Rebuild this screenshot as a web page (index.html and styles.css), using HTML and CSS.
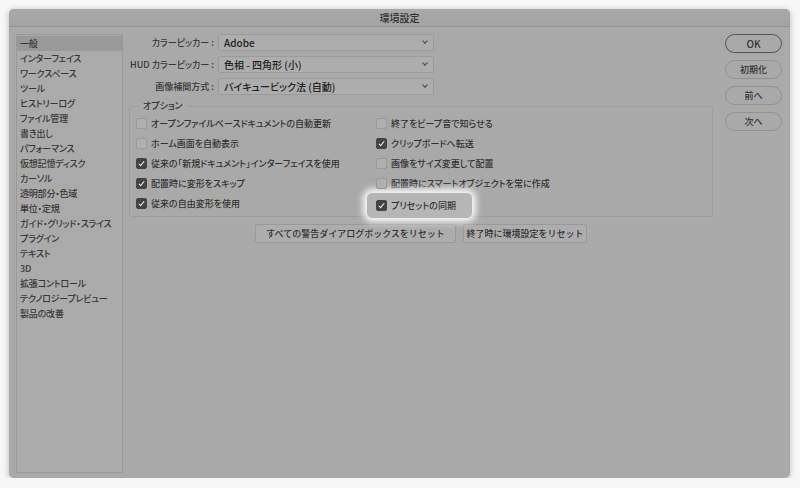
FILE: index.html
```html
<!DOCTYPE html>
<html lang="ja">
<head>
    <meta charset="UTF-8">
    <title>環境設定</title>
    <link rel="stylesheet" href="styles.css">
</head>
<body>
<div class="window">
    <div class="titlebar">環境設定</div>
    <div class="content">
        <ul class="sidebar">
            <li class="active">一般</li>
            <li>インターフェイス</li>
            <li>ワークスペース</li>
            <li>ツール</li>
            <li>ヒストリーログ</li>
            <li>ファイル管理</li>
            <li>書き出し</li>
            <li>パフォーマンス</li>
            <li>仮想記憶ディスク</li>
            <li>カーソル</li>
            <li>透明部分・色域</li>
            <li>単位・定規</li>
            <li>ガイド・グリッド・スライス</li>
            <li>プラグイン</li>
            <li>テキスト</li>
            <li>3D</li>
            <li>拡張コントロール</li>
            <li>テクノロジープレビュー</li>
            <li>製品の改善</li>
        </ul>

        <div class="main">
            <div class="fields">
                <label>カラーピッカー :</label>
                <div class="select">Adobe<span class="chev"></span></div>
                <label>HUD カラーピッカー :</label>
                <div class="select">色相 - 四角形 (小)<span class="chev"></span></div>
                <label>画像補間方式 :</label>
                <div class="select">バイキュービック法 (自動)<span class="chev"></span></div>
            </div>

            <div class="options">
                <span class="legend">オプション</span>
                <div class="col left">
                    <div class="check"><span class="box"></span>オープンファイルベースドキュメントの自動更新</div>
                    <div class="check"><span class="box"></span>ホーム画面を自動表示</div>
                    <div class="check"><span class="box on"></span>従来の「新規ドキュメント」インターフェイスを使用</div>
                    <div class="check"><span class="box on"></span>配置時に変形をスキップ</div>
                    <div class="check"><span class="box on"></span>従来の自由変形を使用</div>
                </div>
                <div class="col">
                    <div class="check"><span class="box"></span>終了をビープ音で知らせる</div>
                    <div class="check"><span class="box on"></span>クリップボードへ転送</div>
                    <div class="check"><span class="box"></span>画像をサイズ変更して配置</div>
                    <div class="check"><span class="box"></span>配置時にスマートオブジェクトを常に作成</div>
                    <div class="check glow"><span class="box on"></span>プリセットの同期</div>
                </div>
            </div>

            <div class="resets">
                <button class="btn wide">すべての警告ダイアログボックスをリセット</button>
                <button class="btn">終了時に環境設定をリセット</button>
            </div>
        </div>

        <div class="actions">
            <button class="pill primary">OK</button>
            <button class="pill">初期化</button>
            <button class="pill">前へ</button>
            <button class="pill">次へ</button>
        </div>
    </div>
</div>
</body>
</html>
```

FILE: styles.css
```css
body {
    margin: 0;
    padding: 9px 0 0 9px;
    background: #f7f7f7;
    font-family: "Noto Sans CJK JP", "Liberation Sans", sans-serif;
    font-size: 9px;
    font-weight: 500;
    color: #333;
    font-feature-settings: "palt";
}
.window {
    width: 781px;
    height: 469px;
    background: #a9a9a9;
    border-radius: 5px;
    box-shadow: 0 1px 6px rgba(0, 0, 0, 0.25);
    overflow: hidden;
}
.titlebar {
    height: 17px;
    line-height: 17px;
    text-align: center;
    font-size: 10px;
    color: #333;
    background: linear-gradient(#a8a8a8, #a3a3a3);
    border-bottom: 1px solid #939393;
}
.content {
    display: flex;
    padding: 7px 0 0 7px;
}
.sidebar {
    list-style: none;
    margin: 0;
    padding: 1px 0 0 0;
    width: 105px;
    height: 436px;
    border: 1px solid #999;
    background: #aaaaaa;
}
.sidebar li {
    height: 15px;
    line-height: 15px;
    padding-left: 3px;
    color: #383838;
    white-space: nowrap;
    letter-spacing: -0.2px;
}
.sidebar li.active {
    background: #999;
}
.main {
    width: 584px;
    margin-left: 6px;
}
.fields {
    display: grid;
    grid-template-columns: 85px 216px;
    column-gap: 4px;
    row-gap: 5px;
    align-items: center;
}
.fields label {
    text-align: right;
    white-space: nowrap;
    color: #383838;
}
.select {
    position: relative;
    height: 15px;
    line-height: 15px;
    padding-left: 5px;
    border: 1px solid #9b9b9b;
    border-radius: 2px;
    background: #adadad;
    color: #222;
    font-size: 10px;
}
.chev {
    position: absolute;
    right: 6px;
    top: 4px;
    width: 3px;
    height: 3px;
    border-right: 1px solid #444;
    border-bottom: 1px solid #444;
    transform: rotate(45deg);
}
.options {
    position: relative;
    display: flex;
    margin-top: 11px;
    padding: 11px 0 0 6px;
    height: 98px;
    border: 1px solid #9c9c9c;
    border-radius: 2px;
}
.legend {
    position: absolute;
    left: 9px;
    top: -7px;
    padding: 0 4px;
    line-height: 12px;
    background: #a9a9a9;
}
.col {
    display: flex;
    flex-direction: column;
    gap: 9px;
}
.col.left {
    flex: 0 0 240px;
}
.check {
    display: flex;
    align-items: center;
    gap: 4px;
    height: 11px;
    white-space: nowrap;
}
.box {
    flex: none;
    width: 9px;
    height: 9px;
    border: 1px solid #999;
    border-radius: 2px;
    background: #b0b0b0;
    position: relative;
}
.box.on {
    background: #444;
    border-color: #444;
}
.box.on::after {
    content: "";
    position: absolute;
    left: 3px;
    top: 1px;
    width: 2px;
    height: 5px;
    border-right: 1.5px solid #eee;
    border-bottom: 1.5px solid #eee;
    transform: rotate(40deg);
}
.glow {
    align-self: flex-start;
    margin: -5px 0 0 -9px;
    padding: 7px 16px 7px 9px;
    background: #b6b6b6;
    border-radius: 5px;
    box-shadow: 0 0 7px 4px rgba(255, 255, 255, 0.95);
}
.resets {
    display: flex;
    justify-content: center;
    gap: 7px;
    margin-top: 7px;
}
.btn {
    height: 19px;
    padding: 0;
    width: 124px;
    font-family: inherit;
    font-size: 9px;
    font-weight: 500;
    color: #333;
    background: #adadad;
    border: 1px solid #999;
    border-radius: 2px;
    white-space: nowrap;
}
.btn.wide {
    width: 201px;
}
.actions {
    display: flex;
    flex-direction: column;
    gap: 7px;
    margin-left: 12px;
}
.pill {
    width: 57px;
    height: 19px;
    font-family: inherit;
    font-size: 9px;
    font-weight: 500;
    color: #333;
    background: #a9a9a9;
    border: 1px solid #919191;
    border-radius: 10px;
}
.pill.primary {
    border: 1.5px solid #555;
    font-size: 10px;
}
```
